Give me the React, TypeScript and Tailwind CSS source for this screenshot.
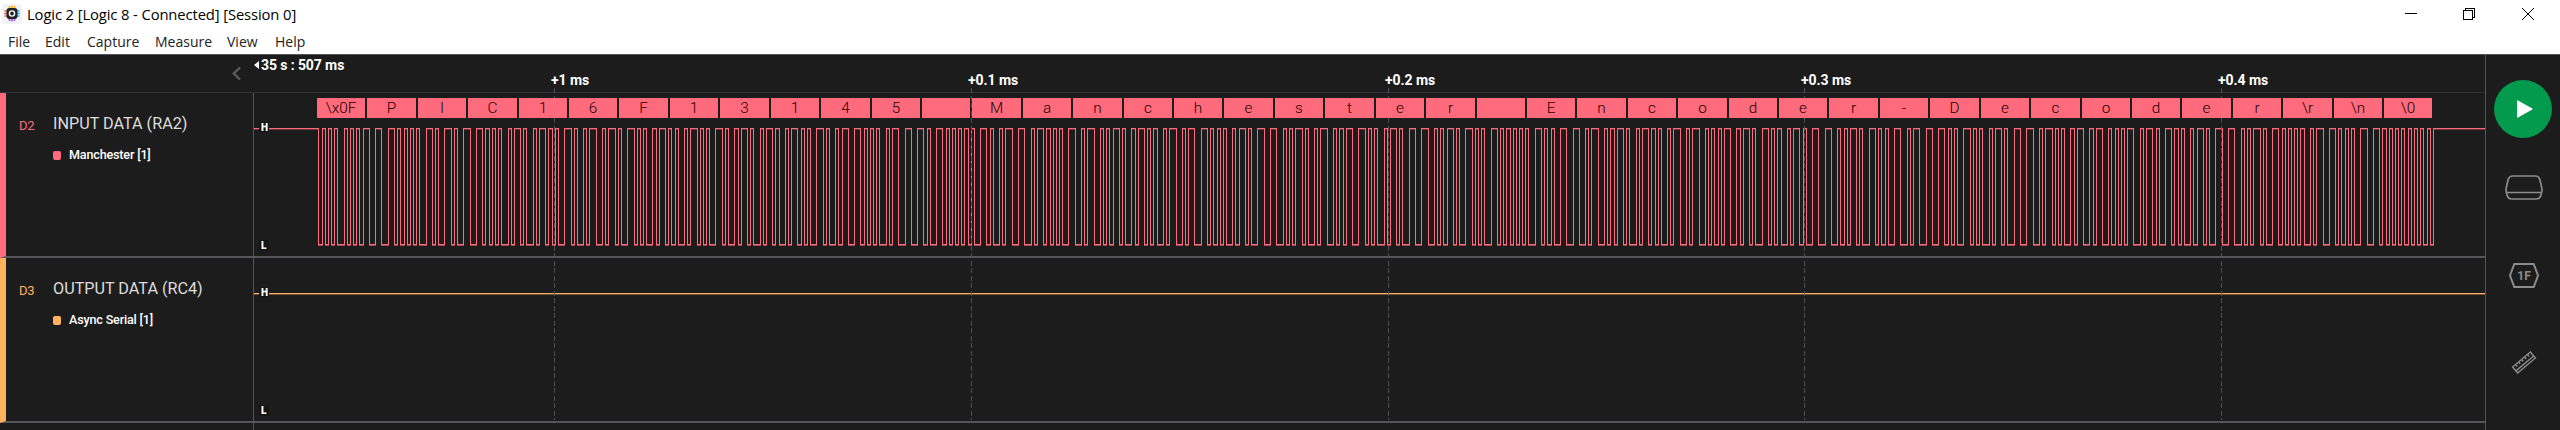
const PINK = '#ff6b7d'

const FRAMES: { label: string; byte: number }[] = [
  { label: '\\x0F', byte: 0x0f },
  ...Array.from('PIC16F13145 Manchester Encoder-Decoder').map((c) => ({ label: c, byte: c.charCodeAt(0) })),
  { label: '\\r', byte: 13 },
  { label: '\\n', byte: 10 },
  { label: '\\0', byte: 0 },
]

const PITCH = 50.418
const HALF_BIT = PITCH / 16
const WAVE_START = 64

/* Manchester: a zero is high-low, a one is low-high, most significant bit first. */
function edges(): number[] {
  const levels: number[] = []
  for (const f of FRAMES) {
    for (let b = 7; b >= 0; b--) {
      const one = (f.byte >> b) & 1
      levels.push(one ? 0 : 1, one ? 1 : 0)
    }
  }
  levels.push(1)
  const out: number[] = []
  for (let i = 1; i < levels.length; i++) {
    if (levels[i] !== levels[i - 1]) out.push(WAVE_START + Math.ceil((i - 1) * HALF_BIT - 0.06))
  }
  return out
}

const EDGES = edges()

function Wave() {
  const rects = []
  let prev = 0
  let high = true
  for (const [i, x] of [...EDGES, 2231].entries()) {
    rects.push(<rect key={`a${i}`} x={prev} y={high ? 0 : 116} width={x - prev + 1} height={1} fill={PINK} />)
    rects.push(
      <rect key={`b${i}`} x={prev} y={high ? 1 : 117} width={x - prev + 1} height={1} fill={PINK} opacity={high ? 0.35 : 0.6} />,
    )
    if (i < EDGES.length) rects.push(<rect key={`c${i}`} x={x} y={0} width={1} height={117} fill={PINK} />)
    prev = x
    high = !high
  }
  return (
    <svg className="absolute top-[35px] left-0" width="2231" height="118" shapeRendering="crispEdges">
      {rects}
    </svg>
  )
}

function Level({ top, children }: { top: string; children: string }) {
  return (
    <span className={`absolute left-[5px] ${top} h-[11px] w-[10px] rounded-[3px] bg-[#151515] pl-[2px] text-[10px] leading-[11px] font-black text-white`}>
      {children}
    </span>
  )
}

function Channel(p: { id: string; name: string; analyzer: string; color: string; fill: string }) {
  return (
    <div className={`flex h-[165px] border-b-2 border-l-6 border-b-[#55555a] ${p.color}`}>
      <div className="flex w-[247px] pt-5 pl-[13px]">
        <span className="w-[34px] pt-[3px] text-[13px] leading-5 tracking-tight">{p.id}</span>
        <div className="flex flex-col">
          <span className="text-[16.2px] leading-[22px] text-[#dcdcdc]">{p.name}</span>
          <span className="mt-[10px] flex items-center gap-2 text-[12.6px] leading-5 font-medium tracking-[-0.18px] text-white">
            <i className={`h-[9px] w-2 rounded-[2px] ${p.fill}`} />
            {p.analyzer}
          </span>
        </div>
      </div>
    </div>
  )
}

const MARKS = [
  { x: 554, label: '+1 ms' },
  { x: 971, label: '+0.1 ms' },
  { x: 1388, label: '+0.2 ms' },
  { x: 1804, label: '+0.3 ms' },
  { x: 2221, label: '+0.4 ms' },
]

function Titlebar() {
  return (
    <div className="flex h-[28px] items-center bg-white pl-[2px]">
      <svg width="20" height="20" viewBox="0 0 20 20">
        <rect width="20" height="20" rx="4" fill="#f1f1f6" />
        <path d="M7.500 2v3M10 1.500v3M12.500 2v3" stroke="#fdb813" strokeWidth="1.700" />
        <path d="M7.500 14v3M10 14v3.500M12.500 14v3" stroke="#a45ee5" strokeWidth="1.700" />
        <path d="M2.500 7h3M2 9.500h3M2.500 12h3" stroke="#f2604c" strokeWidth="1.700" />
        <path d="M15 7h2.500M15 9.500h3M15 12h2.500" stroke="#35b5f1" strokeWidth="1.700" />
        <rect x="4.500" y="4" width="11" height="11" rx="3" fill="#222" />
        <circle cx="10" cy="9.500" r="2.600" fill="none" stroke="#fff" strokeWidth="1.400" />
      </svg>
      <span className="ml-[5px] text-[14.8px] tracking-[-0.12px] text-black">Logic 2 [Logic 8 - Connected] [Session 0]</span>
      <svg className="ml-auto" width="180" height="28" viewBox="2380 0 180 28" fill="none" stroke="#000" shapeRendering="crispEdges">
        <path d="M2405 13.500h12M2463.500 10.500h9v9h-9zM2465.500 10.500v-2h9v9h-2" />
        <path d="M2522 8l12 12M2534 8l-12 12" shapeRendering="auto" />
      </svg>
    </div>
  )
}

export default function App() {
  return (
    <div className="flex h-[430px] w-[2560px] flex-col overflow-hidden bg-[#1c1c1c] font-['Roboto',sans-serif]">
      <div className="h-[54px] shrink-0 bg-white font-['Open_Sans','Noto_Sans',sans-serif]">
        <Titlebar />
        <div className="flex h-[26px] items-center pl-[8px] text-[14px] tracking-[0px] text-[#222]">
          <span className="w-[37px]">File</span>
          <span className="w-[42px]">Edit</span>
          <span className="w-[68px]">Capture</span>
          <span className="w-[72px]">Measure</span>
          <span className="w-[48px]">View</span>
          <span>Help</span>
        </div>
      </div>
      <div className="flex flex-1 border-t border-[#55555a]">
        <div className="w-[253px]">
          <div className="flex h-[38px] justify-end border-b border-[#303035] pt-[11px] pr-3">
            <svg width="9" height="15" viewBox="0 0 9 15" fill="none" stroke="#5c5c5c" strokeWidth="2.300">
              <path d="M8 1.500L1.800 7.500L8 13.500" />
            </svg>
          </div>
          <Channel id="D2" name="INPUT DATA (RA2)" analyzer="Manchester [1]" color="border-l-[#ff6b7d] text-[#ff6b7d]" fill="bg-[#ff6b7d]" />
          <Channel id="D3" name="OUTPUT DATA (RC4)" analyzer="Async Serial [1]" color="border-l-[#ffb15c] text-[#ffb15c]" fill="bg-[#ffb15c]" />
        </div>
        <div className="relative w-[2232px]">
          <div className="flex h-[38px] border-b border-[#303035] text-[14px] leading-5 font-bold tracking-[-0.1px] text-white">
            <span className="flex items-center self-start pl-[1px]">
              <svg width="5" height="8" viewBox="0 0 5 8" className="mr-[2px]">
                <path d="M5 0v8L0 4z" fill="#fff" />
              </svg>
              35 s : 507 ms
            </span>
          </div>
          <div className="relative h-[165px] border-b-2 border-l border-[#55555a]">
            <Wave />
            <Level top="top-[29px]">H</Level>
            <Level top="top-[147px]">L</Level>
          </div>
          <div className="relative h-[165px] border-b-2 border-l border-[#55555a] pt-[35px]">
            <div className="h-[2px] border-b border-[#735233] bg-[#ffb15c]" />
            <Level top="top-[29px]">H</Level>
            <Level top="top-[147px]">L</Level>
          </div>
          <div className="h-[7px] border-l border-[#55555a]" />
          <svg className="absolute top-0 left-0" width="2232" height="366" shapeRendering="crispEdges">
            {MARKS.map((m) => (
              <path key={m.x} d={`M${m.x - 252.5} 33V365`} stroke="#505054" strokeDasharray="5 2.500" />
            ))}
          </svg>
          {FRAMES.map((f, i) => {
            const left = Math.round(64 + i * PITCH - 0.05)
            const right = Math.round(64 + i * PITCH + 48.36)
            return (
              <div
                key={i}
                className="absolute top-[43px] flex h-5 items-center justify-center bg-[#ff6b7d] text-[15.3px] font-light text-[#200]"
                style={{ left, width: right - left }}
              >
                {f.label}
              </div>
            )
          })}
          {MARKS.map((m) => (
            <span
              key={m.x}
              className="absolute top-[15px] text-[14px] leading-5 font-bold tracking-[-0.05px] text-white"
              style={{ left: m.x - 256 }}
            >
              {m.label}
            </span>
          ))}
        </div>
        <div className="flex flex-1 flex-col items-center border-l border-[#55555a] pt-[25px]">
          <div className="flex size-[58px] items-center justify-center rounded-full bg-[#049a4e]">
            <svg width="18" height="20" viewBox="0 0 18 20" className="ml-1">
              <path d="M1.700 2v16L16 10z" fill="#fff" stroke="#fff" strokeWidth="1.300" strokeLinejoin="round" />
            </svg>
          </div>
          <svg className="mt-[37px] ml-[2px]" width="38" height="25" viewBox="0 0 38 25" fill="none" stroke="#8c8c8c" strokeWidth="1.700">
            <path d="M8 1h22q4 0 5 4l2 9q0 3-1 6q-1 4-5 4H7q-4 0-5-4q-1-3-1-6L3 5q1-4 5-4zM1 17.500h36" />
          </svg>
          <svg className="mt-[63px] ml-[2px]" width="30" height="25" viewBox="0 0 30 25">
            <path d="M5.300 1h19.400L29 12.500L24.700 24H5.300L1 12.500z" fill="none" stroke="#8c8c8c" strokeWidth="2" />
            <text x="15" y="16.800" textAnchor="middle" className="fill-[#8c8c8c] text-[12px] font-bold">1F</text>
          </svg>
          <svg className="mt-[62px] ml-[2px]" width="26" height="26" viewBox="-13 -12.500 26 26" fill="none" stroke="#8c8c8c" strokeWidth="1.400">
            <g transform="rotate(-40)">
              <rect x="-11.600" y="-3.900" width="23.200" height="7.800" />
              <path d="M-11.600 1.200h23.200M-7.700-3.900v2.600M-3.900-3.900v2.600M0-3.900v2.600M3.900-3.900v2.600M7.700-3.900v2.600" />
            </g>
          </svg>
        </div>
      </div>
    </div>
  )
}
